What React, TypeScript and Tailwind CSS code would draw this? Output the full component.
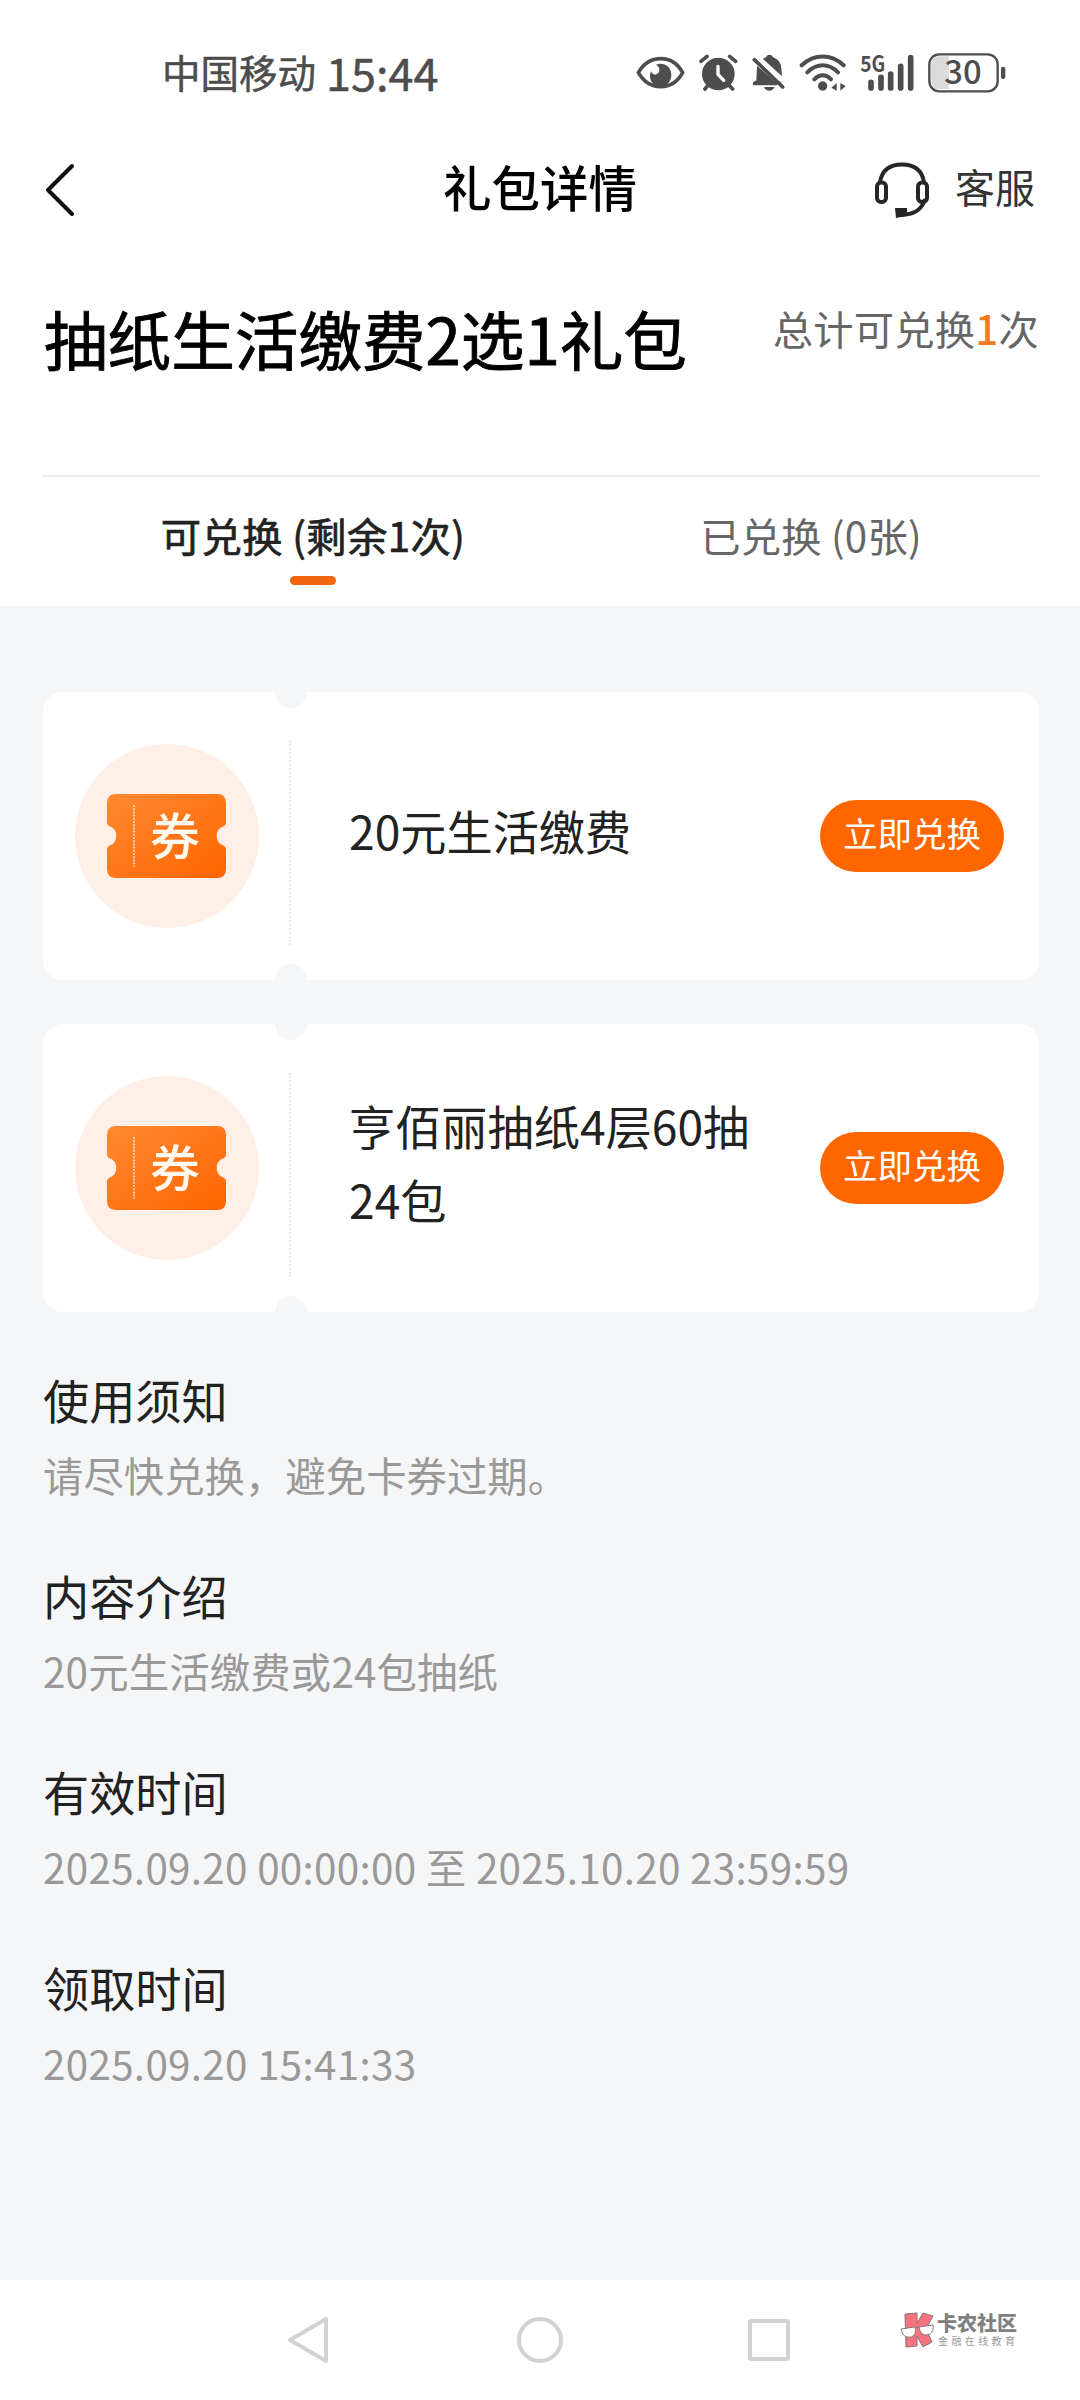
interface Coupon {
  id: number;
  name: string;
}

interface Section {
  label: string;
  text: string;
  spacing: string;
}

const COUPONS: Coupon[] = [
  { id: 1, name: '20元生活缴费' },
  { id: 2, name: '亨佰丽抽纸4层60抽24包' },
];

const SECTIONS: Section[] = [
  { label: '使用须知', text: '请尽快兑换，避免卡券过期。', spacing: '' },
  { label: '内容介绍', text: '20元生活缴费或24包抽纸', spacing: 'tracking-[0.15px]' },
  { label: '有效时间', text: '2025.09.20 00:00:00 至 2025.10.20 23:59:59', spacing: 'tracking-[0.3px]' },
  { label: '领取时间', text: '2025.09.20 15:41:33', spacing: 'tracking-[0.3px]' },
];

function StatusIcons() {
  return (
    <div className="flex items-center gap-[14px] text-[#4d4d4d]">
      {/* Eye comfort */}
      <svg width="49" height="40" viewBox="48 40 147 120" fill="none">
        <path d="M55 99C72 70 97 57 122 57S172 70 188 99C172 128 147 141 122 141S72 128 55 99Z" stroke="currentColor" strokeWidth="11" strokeLinejoin="round" />
        <path d="M118 72C139 71 154 85 154 105C154 126 140 140 121 140C103 140 90 127 90 110C90 104 91 99 94 95C97 105 106 108 114 101C122 93 118 80 108 75Z" fill="currentColor" />
      </svg>
      {/* Alarm */}
      <svg width="39" height="40" viewBox="237 40 117 120" fill="none" strokeLinecap="round">
        <circle cx="295" cy="103" r="49" fill="currentColor" />
        <path d="M243 65L261 50M329 50L347 65M263 138L255 148M328 138L338 148" stroke="currentColor" strokeWidth="11" />
        <path d="M294 80V104L311 122" stroke="#fff" strokeWidth="10" strokeLinejoin="round" />
      </svg>
      {/* Muted bell */}
      <svg width="33" height="40" viewBox="396 40 99 120" fill="none">
        <path d="M429 58C433 55 435 54 438 53C440 48 443 45 448 45C454 45 457 48 459 53C474 58 483 70 484 85L486 110Z" fill="currentColor" />
        <path d="M411 78L466 126H486L469 137H401C397 134 398 128 402 126L409 122Z" fill="currentColor" />
        <path d="M432 142H464C460 150 455 153 448 153S435 150 432 142Z" fill="currentColor" />
        <path d="M403 60L488 142" stroke="currentColor" strokeWidth="11" strokeLinecap="round" />
      </svg>
      {/* Wi-Fi */}
      <svg width="47" height="40" viewBox="537 40 141 120" fill="none" strokeLinecap="round">
        <path d="M545 77C583 42 633 42 671 77M562 98C591 70 625 70 654 98M583 119C598 103 618 103 633 119" stroke="currentColor" strokeWidth="12" />
        <circle cx="608" cy="139" r="14" fill="currentColor" />
        <path d="M650 130V153L634 144ZM661 130L677 139L661 153Z" fill="currentColor" />
      </svg>
      {/* Mobile signal */}
      <svg width="54" height="40" viewBox="720 40 162 120" className="overflow-visible">
        <text x="721" y="98" fontSize="67" fontWeight="700" textLength="75" lengthAdjust="spacingAndGlyphs" fill="currentColor">5G</text>
        <path d="M753 128V145M783 113V145M812 103V145M842 80V145M872 54V145" stroke="currentColor" strokeWidth="17" strokeLinecap="round" />
      </svg>
      {/* Battery */}
      <svg width="78" height="40" viewBox="924 40 234 120" fill="none" className="overflow-visible">
        <path d="M958 50H987V148H958Q934 148 934 124V74Q934 50 958 50Z" fill="#dadada" />
        <rect x="928" y="44" width="205" height="111" rx="30" stroke="currentColor" strokeWidth="7" />
        <text x="973" y="134" fontSize="99" fontWeight="500" textLength="112" lengthAdjust="spacingAndGlyphs" fill="currentColor">30</text>
        <rect x="1143" y="81" width="13" height="37" rx="6" fill="currentColor" />
      </svg>
    </div>
  );
}

function HeadsetIcon() {
  return (
    <svg width="56" height="58" viewBox="0 0 56 58" fill="none" stroke="#262626">
      <path d="M6 21C8 9 16 3.5 28 3.5S48 9 50 21" strokeWidth="4" />
      <rect x="3" y="21.5" width="9" height="19.5" rx="4" strokeWidth="4" />
      <rect x="44" y="21.5" width="9" height="19.5" rx="4" strokeWidth="4" />
      <path d="M51 38C48 48 42 54 22 54.5" strokeWidth="4" />
      <path d="M21 47H33V53L22 57Z" fill="#262626" stroke="none" />
    </svg>
  );
}

function TicketIcon() {
  return (
    <svg width="184" height="184" viewBox="0 0 184 184">
      <defs>
        <linearGradient id="ticket" x1="0" y1="0" x2="1" y2="1">
          <stop offset="0" stopColor="#ff8a32" />
          <stop offset="1" stopColor="#ff6400" />
        </linearGradient>
      </defs>
      <circle cx="92" cy="92" r="92" fill="#ffefe6" />
      <path
        d="M41 50H142Q151 50 151 59V79Q151 81 149 82A10.5 10.5 0 0 0 149 102Q151 103 151 105V125Q151 134 142 134H41Q32 134 32 125V105Q32 103 34 102A10.5 10.5 0 0 0 34 82Q32 81 32 79V59Q32 50 41 50Z"
        fill="url(#ticket)"
      />
      <path d="M59 61V123" stroke="#fff" strokeOpacity="0.75" strokeWidth="1.6" strokeDasharray="2 1.2" />
      <text x="75" y="111" fontSize="50" fontWeight="500" fill="#fff8ef">券</text>
    </svg>
  );
}

function CouponCard({ coupon }: { coupon: Coupon }) {
  return (
    <div className="relative flex h-72 items-center overflow-hidden rounded-[20px] bg-white">
      {/* Notches */}
      <span className="absolute -top-4 left-[232px] h-8 w-8 rounded-full bg-[#f5f6f8]" />
      <span className="absolute -bottom-4 left-[232px] h-8 w-8 rounded-full bg-[#f5f6f8]" />

      <div className="ml-[32px] shrink-0">
        <TicketIcon />
      </div>
      <div className="mt-[14px] ml-[30px] h-[204px] shrink-0 border-l-2 border-dotted border-[#e8e8e8]" />
      <p className="ml-[58px] w-[410px] pb-[12px] text-[46.2px] leading-[74px] text-[#222]">{coupon.name}</p>
      <button className="mr-[35px] ml-auto h-[72px] w-[184px] shrink-0 rounded-full bg-[#ff6600] pb-[8px] text-[34.5px] leading-none text-white">
        立即兑换
      </button>
    </div>
  );
}

function Watermark() {
  return (
    <div className="absolute top-[31px] left-[900px] flex gap-[2px]">
      <svg width="35" height="38" viewBox="0 0 35 38" stroke="#8b7376" strokeWidth="1">
        <path d="M5 3L17 2L17 12L23 2L33 5L26 18L32 31L23 36L17 25V35L6 36Z" fill="#f3737f" />
        <path d="M1 18L15 16C17 23 13 27 8 26C4 26 2 22 1 18ZM19 16L33 14C34 20 31 24 26 24C22 24 20 21 19 16Z" fill="#fff" />
        <path d="M15 17L19 16" />
      </svg>
      <div className="flex flex-col text-[#808080]">
        <span className="text-[20px] leading-[24px] font-black">卡农社区</span>
        <span className="pl-px text-[10px] leading-[12px] tracking-[3.4px] whitespace-nowrap text-[#999]">金融在线教育</span>
      </div>
    </div>
  );
}

export default function App() {
  return (
    <div className="flex h-[2400px] w-[1080px] flex-col bg-[#f5f6f8] font-['Noto_Sans_CJK_SC',sans-serif]">
      <div className="h-[606px] bg-white">
        {/* Status bar */}
        <div className="flex h-[146px] items-center justify-between pr-[74px] pl-[162px] text-[#4d4d4d]">
          <div className="flex items-center gap-[10px] pb-[4px] leading-none [-webkit-text-stroke:0.5px]">
            <span className="text-[38.5px]">中国移动</span>
            <span className="text-[45px]">15:44</span>
          </div>
          <StatusIcons />
        </div>

        {/* Header */}
        <div className="grid h-[88px] grid-cols-3 items-center pr-[45px] pl-[44px]">
          <svg width="32" height="54" viewBox="0 0 32 54" fill="none" stroke="#111" strokeWidth="4" strokeLinecap="round" strokeLinejoin="round">
            <path d="M28 3L4 27L28 51" />
          </svg>
          <h1 className="pb-[8px] pl-px text-center text-[48.5px] leading-none font-medium text-black">礼包详情</h1>
          <div className="flex items-center justify-end gap-[25px]">
            <HeadsetIcon />
            <span className="pb-[8px] text-[40px] leading-none text-[#333]">客服</span>
          </div>
        </div>

        {/* Package title */}
        <div className="mr-[40px] ml-[42px] flex h-[243px] items-start justify-between border-b-2 border-[#ececec] pt-[67px]">
          <h2 className="pl-[2px] text-[63.6px] leading-[72px] text-black [-webkit-text-stroke:0.9px]">抽纸生活缴费2选1礼包</h2>
          <p className="pt-[3px] pr-px text-[40.3px] leading-[48px] tracking-[0.2px] text-[#666]">
            总计可兑换<span className="font-medium text-[#f37a1f]">1</span>次
          </p>
        </div>

        {/* Tabs */}
        <div className="mr-[20px] ml-[64px] grid h-[129px] grid-cols-2 text-center text-[40.3px] leading-[52px] tracking-[0.2px]">
          <div className="flex flex-col items-center pt-[32px]">
            <span className="text-[#222] [-webkit-text-stroke:0.7px] tracking-[0.4px]">可兑换 (剩余1次)</span>
            <span className="mt-[15px] h-[9px] w-[46px] rounded-full bg-[#f0660e]" />
          </div>
          <div className="pt-[32px] text-[#666]">已兑换 (0张)</div>
        </div>
      </div>

      <div className="flex flex-1 flex-col pt-[86px] pr-[41px] pl-[43px]">
        <div className="flex flex-col gap-11">
          {COUPONS.map((coupon) => (
            <CouponCard key={coupon.id} coupon={coupon} />
          ))}
        </div>

        {/* Notes */}
        <div className="mt-[52px] flex flex-col gap-[50px]">
          {SECTIONS.map((section) => (
            <div key={section.label} className="h-[146px]">
              <h3 className="text-[46.2px] leading-[70px] text-[#222]">{section.label}</h3>
              <p className={`mt-[11px] text-[40.4px] leading-[60px] whitespace-nowrap text-[#999] ${section.spacing}`}>{section.text}</p>
            </div>
          ))}
        </div>
      </div>

      {/* System navigation */}
      <div className="relative flex h-[120px] items-center bg-white pl-[286px]">
        <svg width="506" height="50" viewBox="0 0 506 50" fill="none" stroke="#d2d2d2" strokeWidth="4" strokeLinejoin="round">
          <path d="M4 25L40 4V46Z" />
          <circle cx="254" cy="25" r="21" />
          <rect x="464" y="6" width="38" height="38" rx="1" />
        </svg>
        <Watermark />
      </div>
    </div>
  );
}
